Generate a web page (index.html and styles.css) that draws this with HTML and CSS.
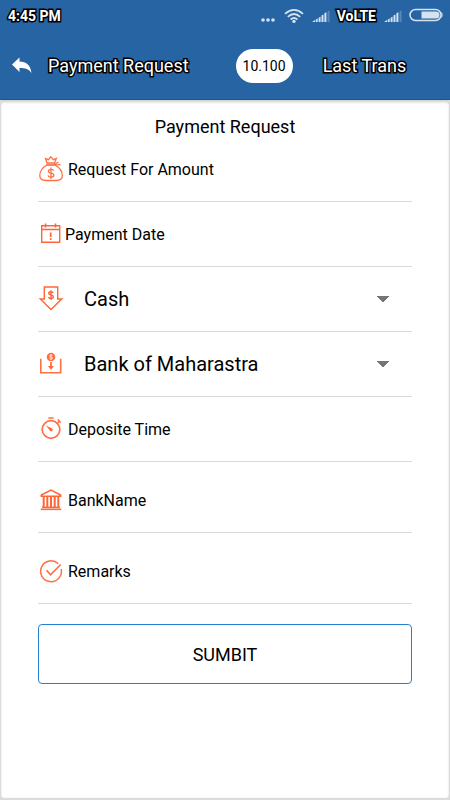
FILE: index.html
```html
<!DOCTYPE html>
<html lang="en">
<head>
<meta charset="utf-8">
<meta name="viewport" content="width=device-width, initial-scale=1">
<title>Payment Request</title>
<link rel="stylesheet" href="styles.css">
</head>
<body>
<header class="top">
  <div class="status">
    <span class="status-text outlined">4:45 PM</span>
    <div class="status-icons">
      <svg class="dots" width="16" height="16" viewBox="0 0 16 16"><g fill="#d5e2f0"><circle cx="3" cy="12" r="1.8"/><circle cx="8" cy="12" r="1.8"/><circle cx="13" cy="12" r="1.8"/></g></svg>
      <svg class="wifi" width="20" height="16" viewBox="0 0 20 16"><g fill="none" stroke="#d5e2f0" stroke-width="1.7"><path d="M1 5.800Q10-2 19 5.800"/><path d="M3.800 8.800Q10 3.200 16.200 8.800"/><path d="M6.600 11.500Q10 8.500 13.400 11.500"/></g><circle cx="10" cy="13.400" r="1.700" fill="#d5e2f0"/></svg>
      <svg class="signal" width="18" height="16" viewBox="0 0 18 16"><g fill="#d5e2f0"><path d="M0 14l3-2v2zM3.700 11.500l2-1V14h-2zM6.600 9.700l2-1V14h-2zM9.500 7.500l2-1V14h-2zM12.400 5.300l2-1V14h-2z"/><path opacity=".3" d="M15.500 3.500l2-1V14h-2z"/></g></svg>
      <span class="status-text outlined">VoLTE</span>
      <svg class="signal" width="18" height="16" viewBox="0 0 18 16"><g fill="#d5e2f0"><path d="M0 14l3-2v2zM3.700 11.500l2-1V14h-2zM6.600 9.700l2-1V14h-2zM9.500 7.500l2-1V14h-2zM12.400 5.300l2-1V14h-2z"/><path opacity=".3" d="M15.500 3.500l2-1V14h-2z"/></g></svg>
      <svg class="battery" width="34" height="16" viewBox="0 0 34 16"><rect x="1" y="1.500" width="31" height="11" rx="5.500" fill="none" stroke="#d5e2f0" stroke-width="1.500"/><path d="M12.500 3.500H27a3.500 3.500 0 0 1 0 7H12.500z" fill="#d5e2f0"/><path d="M32.500 4.500q1.500 2.500 0 5" stroke="#d5e2f0" fill="none"/></svg>
    </div>
  </div>
  <nav class="toolbar">
    <button class="back" type="button" aria-label="Back">
      <svg width="20" height="18" viewBox="0 0 20 18"><path d="M0 7.500 7.500.5v4C14 4.500 18.500 8 19.500 16c-2.500-4-6-5-12-5v4z" fill="#fff"/></svg>
    </button>
    <span class="toolbar-title outlined">Payment Request</span>
    <span class="balance">10.100</span>
    <a class="last outlined" href="#">Last Trans</a>
  </nav>
</header>
<main class="card">
  <h1>Payment Request</h1>
  <form>
    <div class="row">
      <svg class="icon" viewBox="0 0 26 28"><g fill="none" stroke="#ff7043" stroke-width="1.300"><path d="M8.500 10.200C3.500 13 1.800 17 1.800 20.500c0 4 2.500 5 6 5h10.500c3.500 0 6-1 6-5 0-3.500-2-7.500-7-10.300z"/><path d="M8 9.800h9.500M9 8 7.500 3.500l3 1.200 2.300-3 2.500 3 3-1.200L16.500 8zM16.500 9.500l4-2.500M17 10.200l5.500-.5"/><path d="M15.800 15.500c-.5-1-1.500-1.200-2.800-1.200-1.600 0-2.600.8-2.600 1.900 0 2.800 5.400 1.200 5.400 4 0 1.300-1.100 2-2.800 2-1.500 0-2.600-.5-3-1.700M13 12.500v11.500"/></g></svg>
      <input type="text" placeholder="Request For Amount" aria-label="Request For Amount">
    </div>
    <div class="row">
      <svg class="icon date" viewBox="0 0 24 24"><g fill="none" stroke="#ff6636"><path d="M2.700 3.700h18v16.600h-18zM2.700 7.500h18" stroke-width="1.400"/><path d="M6.500 1.500v4M16.500 1.500v4" stroke-width="1.600"/><path d="M11.700 10.500V15M11.700 16.300V18" stroke-width="1.700"/></g></svg>
      <input type="text" placeholder="Payment Date" aria-label="Payment Date">
    </div>
    <div class="row">
      <svg class="icon" viewBox="0 0 26 28"><g fill="none" stroke="#ff6636" stroke-width="1.400"><path d="M6.300 2h13.400v12h4L13 24.500 2.300 14h4z"/><path d="M15.300 8c-.4-1-1.200-1.300-2.300-1.300-1.400 0-2.300.6-2.300 1.600 0 2.400 4.700 1 4.700 3.500 0 1.100-1 1.700-2.400 1.700-1.300 0-2.200-.5-2.500-1.500M13 5.200v9.800"/></g></svg>
      <select aria-label="Payment mode"><option>Cash</option></select>
    </div>
    <div class="row">
      <svg class="icon" viewBox="0 0 26 28"><path d="M2.800 8.800v14h19.900v-14" fill="none" stroke="#ff7043" stroke-width="1.600"/><circle cx="13" cy="7" r="4.300" fill="#ff7043"/><path d="M14.500 5.500c-1-.9-3-.6-3 .4 0 1.300 3 .7 3 2.200 0 1.100-2 1.300-3 .4M13 4v6" fill="none" stroke="#fff" stroke-width=".7"/><path d="M13 12v6" stroke="#ff6636" stroke-width="1.700"/><path d="M10 16h6l-3 3.700z" fill="#ff6636"/></svg>
      <select aria-label="Bank"><option>Bank of Maharastra</option></select>
    </div>
    <div class="row">
      <svg class="icon" viewBox="0 0 26 28"><g fill="none" stroke="#ff7043" stroke-width="1.700"><circle cx="13" cy="14.500" r="8.800"/><path d="M10.300 3h5.400M19.500 8l2-2M19.700 4.500l3 2.800"/></g><path d="m8 10.500 6.500 3.200a1.700 1.700 0 0 1-2.300 2.400z" fill="#ff6636"/></svg>
      <input type="text" placeholder="Deposite Time" aria-label="Deposite Time">
    </div>
    <div class="row tall">
      <svg class="icon" viewBox="0 0 26 28"><g fill="none" stroke="#ff6636"><path d="M3.300 9 13 4l9.700 5v1.200H3.300z" stroke-width="1.500"/><path d="M5.700 11v10M9.300 11v10M13 11v10M16.700 11v10M20.300 11v10" stroke-width="2"/><path d="M4 21.300h18" stroke-width="1.400"/><path d="M2.800 23.300h20.400" stroke-width="1.600"/></g></svg>
      <input type="text" placeholder="BankName" aria-label="BankName">
    </div>
    <div class="row tall">
      <svg class="icon" viewBox="0 0 26 28"><g fill="none" stroke="#ff7043" stroke-width="1.500"><path d="M20.300 6.800A10.400 10.400 0 1 0 23.200 12"/><path d="m8.500 13.300 4 4.500L22.700 7.500" stroke-width="1.700"/></g></svg>
      <input type="text" placeholder="Remarks" aria-label="Remarks">
    </div>
    <button class="submit" type="submit">SUMBIT</button>
  </form>
</main>
</body>
</html>
```
FILE: styles.css
```css
* {
  box-sizing: border-box;
}

body {
  margin: 0;
  min-height: 100vh;
  display: flex;
  flex-direction: column;
  background: #dcdcdc;
  color: #000;
  font-family: Roboto, "Liberation Sans", sans-serif;
}

svg {
  display: block;
  flex: none;
}

.top {
  background: #2664a3;
  border-bottom: 1px solid #1d568f;
  color: #fff;
}

.outlined {
  -webkit-text-stroke: 3px #000;
  paint-order: stroke fill;
}

.status {
  display: flex;
  align-items: center;
  justify-content: space-between;
  height: 32px;
  padding: 0 7px 0 8px;
}

.status-text {
  font-size: 14px;
  font-weight: 700;
}

.status-icons {
  display: flex;
  align-items: center;
  gap: 8px;
}

.signal {
  margin-right: -1px;
}

.toolbar {
  display: flex;
  align-items: center;
  height: 67px;
  padding: 0 12px;
  font-size: 18px;
}

.back {
  padding: 0;
  border: 0;
  background: none;
}

.toolbar-title {
  margin-left: 16px;
}

.balance {
  margin-left: 47px;
  padding: 0 7px;
  border-radius: 17px;
  background: #fff;
  color: #000;
  font-size: 14px;
  line-height: 34px;
}

.last {
  margin-left: 30px;
  color: #fff;
  text-decoration: none;
}

.card {
  flex: 1;
  margin: 0 1px 2px;
  padding: 16px 37px;
  border-radius: 3px;
  background: #fff;
  box-shadow: inset 0 3px 3px -1px #ccc, inset 0 0 1px #ccc;
}

h1 {
  margin: 0;
  font-size: 18px;
  font-weight: 400;
  line-height: 21px;
  text-align: center;
}

.row {
  display: flex;
  align-items: center;
  height: 65px;
  border-bottom: 1px solid #d9d9d9;
}

.tall {
  height: 71px;
  padding-top: 6px;
}

.icon {
  width: 26px;
  height: 28px;
}

.date {
  width: 24px;
  height: 24px;
  margin-left: 1px;
}

input,
select {
  flex: 1;
  min-width: 0;
  height: 40px;
  border: 0;
  outline: 0;
  background: none;
  color: #000;
  font: 16px Roboto, "Liberation Sans", sans-serif;
}

input {
  padding: 0 0 0 4px;
}

.date + input {
  padding-left: 2px;
}

input::placeholder {
  color: #000;
  opacity: 1;
}

select {
  appearance: none;
  padding: 0 40px 0 20px;
  background: conic-gradient(from -45deg at 50% 100%, #757575 90deg, transparent 0) right 23px center / 12px 6px no-repeat;
  font-size: 20px;
}

.submit {
  display: block;
  width: 100%;
  height: 60px;
  margin-top: 20px;
  border: 1px solid #2480cf;
  border-radius: 4px;
  background: #fff;
  color: #000;
  font: 18px Roboto, "Liberation Sans", sans-serif;
}
```
